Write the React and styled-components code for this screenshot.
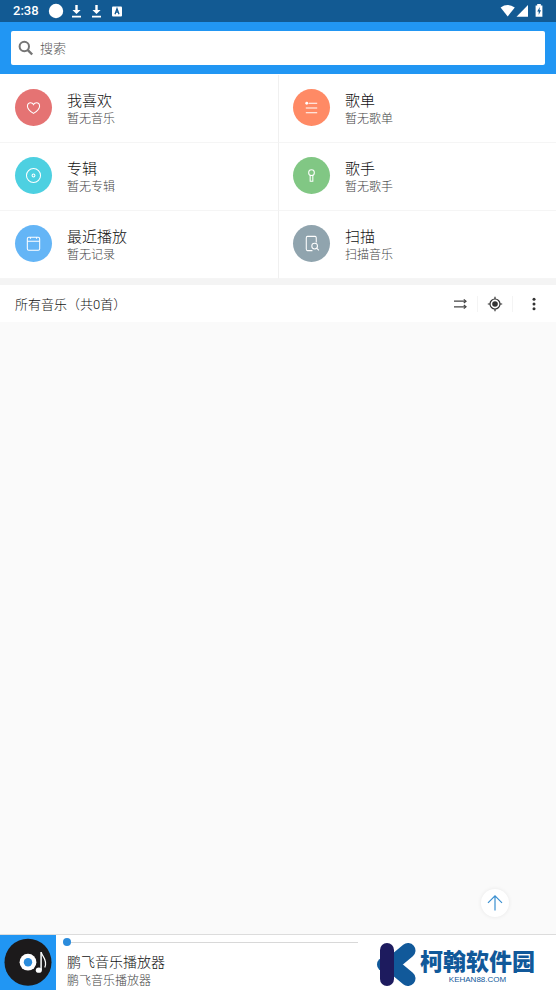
import React, { useState } from 'react';
import styled, { createGlobalStyle } from 'styled-components';

const categories = [
    { name: '我喜欢', desc: '暂无音乐', color: '#e57373', icon: 'heart' },
    { name: '歌单', desc: '暂无歌单', color: '#ff8a65', icon: 'list' },
    { name: '专辑', desc: '暂无专辑', color: '#4dd0e1', icon: 'disc' },
    { name: '歌手', desc: '暂无歌手', color: '#81c784', icon: 'mic' },
    { name: '最近播放', desc: '暂无记录', color: '#64b5f6', icon: 'recent' },
    { name: '扫描', desc: '扫描音乐', color: '#90a4ae', icon: 'scan' },
];

const icons = {
    heart: <path d="M10 16.2C6 13.6 3.6 11.4 3.6 8.6C3.6 6.4 5.1 5 6.9 5C8.4 5 9.5 5.9 10 6.9C10.5 5.9 11.6 5 13.1 5C14.9 5 16.4 6.4 16.4 8.6C16.4 11.4 14 13.6 10 16.2Z" />,
    list: (
        <>
            <path d="M7 5.5H16M4 10.5H16M4 15.5H16" />
            <circle cx="5" cy="5.5" r="1.5" fill="#fff" stroke="none" />
        </>
    ),
    disc: (
        <>
            <circle cx="10" cy="10" r="7.4" />
            <circle cx="10" cy="10" r="1.5" />
        </>
    ),
    mic: (
        <>
            <circle cx="10" cy="7" r="3" />
            <path d="M8.6 9.8V16H11.4V9.8" />
        </>
    ),
    recent: (
        <>
            <rect x="3.5" y="3.5" width="13" height="13.5" rx="1.5" />
            <path d="M3.5 7.6H16.5M6.8 3.5V5M13.2 3.5V5" />
        </>
    ),
    scan: (
        <>
            <path d="M15 9V4.2Q15 2.5 13.8 2.5H5.7Q4.5 2.5 4.5 4.2V15.8Q4.5 17.5 5.7 17.5H11" />
            <circle cx="13.3" cy="12.7" r="3" />
            <path d="M15.4 14.8L17.8 17.2" />
        </>
    ),
};

function StatusBar() {
    return (
        <Status>
            <Clock>2:38</Clock>
            <svg width="76" height="22" viewBox="0 0 76 22" fill="#fff">
                <circle cx="8" cy="11" r="7.2" />
                <path d="M27.3 5H29.7V10H32.6L28.5 14L24.4 10H27.3ZM24 15.8H33V17.4H24Z" />
                <path d="M47.3 5H49.7V10H52.6L48.5 14L44.4 10H47.3ZM44 15.8H53V17.4H44Z" />
                <rect x="64" y="6.4" width="10" height="10" rx="1" />
                <path d="M67 14.2L69 8.7L71 14.2M67.7 12.2H70.3" fill="none" stroke="#125a93" strokeWidth="1.3" />
            </svg>
            <Spacer />
            <svg width="46" height="22" viewBox="0 0 46 22" fill="#fff">
                <path d="M2.6 7.5Q9.7 2.6 16.8 7.5L9.7 16.4Z" />
                <path d="M30 5V16.8H18.5Z" />
                <path d="M39.2 4H42.8V5.4H44.4V16.8H37.6V5.4H39.2Z" />
                <path d="M41.8 7L39.2 11.4H40.7V15L43 10.2H41.5Z" fill="#125a93" />
            </svg>
        </Status>
    );
}

function Category({ item }) {
    return (
        <Cell>
            <Round $color={item.color}>
                <svg width="19" height="19" viewBox="0 0 20 20" fill="none" stroke="#fff" strokeWidth="1.1">
                    {icons[item.icon]}
                </svg>
            </Round>
            <Lines>
                <CellTitle>{item.name}</CellTitle>
                <CellDesc>{item.desc}</CellDesc>
            </Lines>
        </Cell>
    );
}

function Player() {
    const [position, setPosition] = useState(0);

    return (
        <PlayerBar>
            <Cover>
                <svg width="56" height="55" viewBox="0 0 56 55">
                    <circle cx="28" cy="27.2" r="23.5" fill="#1c1a1b" />
                    <circle cx="28" cy="27.2" r="8.4" fill="#fff" />
                    <circle cx="28" cy="27.2" r="4.2" fill="#2b8cdc" />
                    <ellipse cx="38.8" cy="35.2" rx="3" ry="2.6" fill="#fff" />
                    <path d="M41.1 35V17" stroke="#fff" strokeWidth="1.5" />
                    <path d="M41.4 17.5C42 21.5 48 24.5 44.8 32.5" fill="none" stroke="#fff" strokeWidth="1.2" />
                </svg>
            </Cover>
            <Track>
                <Seek
                    type="range"
                    aria-label="播放进度"
                    value={position}
                    onChange={(e) => setPosition(e.target.value)}
                />
                <Song>鹏飞音乐播放器</Song>
                <Artist>鹏飞音乐播放器</Artist>
            </Track>
            <Brand>
                <svg width="40" height="44" viewBox="0 0 40 44">
                    <path d="M13 23.5L31 8.5M13 21.5L31 36.5" stroke="#11599a" strokeWidth="15" strokeLinecap="round" />
                    <circle cx="7" cy="22.5" r="7" fill="#11599a" />
                    <rect x="3" y="1" width="14" height="43" rx="7" fill="#1d1b5e" />
                </svg>
                <BrandText>
                    <BrandName>柯翰软件园</BrandName>
                    <BrandSite>KEHAN88.COM</BrandSite>
                </BrandText>
            </Brand>
        </PlayerBar>
    );
}

function App() {
    return (
        <Page>
            <GlobalStyle />
            <StatusBar />
            <Header>
                <SearchBox>
                    <svg width="16" height="16" viewBox="0 0 16 16" fill="none" stroke="#757575" strokeWidth="2">
                        <circle cx="6.3" cy="6.5" r="4.7" />
                        <path d="M9.6 9.8L14.2 14.5" strokeWidth="2.4" />
                    </svg>
                    <SearchInput type="text" placeholder="搜索" aria-label="搜索" />
                </SearchBox>
            </Header>
            <Grid>
                {categories.map((item) => (
                    <Category key={item.name} item={item} />
                ))}
            </Grid>
            <ListHead>
                <ListTitle>所有音乐（共0首）</ListTitle>
                <Tool aria-label="播放顺序">
                    <svg width="16" height="16" viewBox="0 0 16 16" fill="none" stroke="#444" strokeWidth="1.2">
                        <path d="M2 5.2H13.5M2 10.8H13.5" />
                        <path d="M11.8 3.4L14 5.2L11.8 7M11.8 9L14 10.8L11.8 12.6" />
                    </svg>
                </Tool>
                <Tool aria-label="定位">
                    <svg width="16" height="16" viewBox="0 0 16 16" fill="none" stroke="#333" strokeWidth="1.2">
                        <circle cx="8" cy="8" r="5" />
                        <circle cx="8" cy="8" r="2.8" fill="#333" stroke="none" />
                        <path d="M8 .8V3M8 13V15.2M.8 8H3M13 8H15.2" />
                    </svg>
                </Tool>
                <MoreTool aria-label="更多">
                    <svg width="16" height="16" viewBox="0 0 16 16" fill="#333">
                        <circle cx="8" cy="3.2" r="1.5" />
                        <circle cx="8" cy="8" r="1.5" />
                        <circle cx="8" cy="12.8" r="1.5" />
                    </svg>
                </MoreTool>
            </ListHead>
            <SongList>
                <TopButton aria-label="回到顶部">
                    <svg width="18" height="18" viewBox="0 0 18 18" fill="none" stroke="#3a8fd0" strokeWidth="1.2">
                        <path d="M9 16.5V1.5M2 8.8L9 1.8L16 8.8" />
                    </svg>
                </TopButton>
            </SongList>
            <Player />
        </Page>
    );
}

export default App;

const GlobalStyle = createGlobalStyle`
    * {
        box-sizing: border-box;
    }

    body {
        margin: 0;
        font-family: Roboto, "Noto Sans CJK SC", sans-serif;
        color: #333;
    }

    button {
        margin: 0;
        padding: 0;
        border: none;
        background: none;
        font: inherit;
        color: inherit;
        cursor: pointer;
    }

    svg {
        display: block;
        flex-shrink: 0;
    }
`;

const Page = styled.div`
    display: flex;
    flex-direction: column;
    min-height: 100vh;
    background: #fafafa;
`;

const Status = styled.div`
    display: flex;
    align-items: center;
    height: 22px;
    padding: 0 12px 0 13px;
    background: #125a93;
`;

const Clock = styled.span`
    width: 35px;
    font-size: 13px;
    font-weight: 500;
    line-height: 24px;
    color: #fff;
`;

const Spacer = styled.div`
    flex: 1;
`;

const Header = styled.header`
    padding: 9px 11px;
    background: #2196f3;
`;

const SearchBox = styled.label`
    display: flex;
    align-items: center;
    gap: 6px;
    height: 34px;
    padding: 0 7px;
    border-radius: 2px;
    background: #fff;
`;

const SearchInput = styled.input`
    flex: 1;
    min-width: 0;
    padding: 0;
    border: none;
    outline: none;
    background: none;
    font-family: inherit;
    font-size: 13px;
    font-weight: 300;

    &::placeholder {
        color: #555;
    }
`;

const Grid = styled.nav`
    display: grid;
    grid-template-columns: 1fr 1fr;
    padding-top: 1px;
    background: #fff;
`;

const Cell = styled.button`
    display: flex;
    align-items: center;
    gap: 15px;
    height: 68px;
    padding: 0 15px 2px;
    border-bottom: 1px solid #f5f5f5;
    text-align: left;

    &:nth-child(even) {
        border-left: 1px solid #f0f0f0;
        padding-left: 14px;
    }
`;

const Round = styled.span`
    display: flex;
    align-items: center;
    justify-content: center;
    width: 37px;
    height: 37px;
    border-radius: 50%;
    background: ${(props) => props.$color};
`;

const Lines = styled.span`
    display: flex;
    flex-direction: column;
    padding-top: 4px;
`;

const CellTitle = styled.span`
    font-size: 15px;
    font-weight: 300;
    line-height: 18px;
    color: #111;
`;

const CellDesc = styled.span`
    font-size: 12px;
    font-weight: 300;
    line-height: 18px;
    color: #444;
`;

const ListHead = styled.div`
    display: flex;
    align-items: center;
    height: 43px;
    padding: 0 14px 0 15px;
    border-top: 6px solid #f4f4f4;
    background: #fff;
`;

const ListTitle = styled.h2`
    flex: 1;
    margin: 0;
    font-size: 13px;
    font-weight: 300;
    color: #111;
`;

const Tool = styled.button`
    padding: 0 9px;
    border-right: 1px solid #f4f4f4;
`;

const MoreTool = styled.button`
    margin-left: 13px;
`;

const SongList = styled.main`
    position: relative;
    flex: 1;
`;

const TopButton = styled.button`
    position: absolute;
    right: 47px;
    bottom: 17px;
    display: flex;
    align-items: center;
    justify-content: center;
    width: 28px;
    height: 28px;
    border-radius: 50%;
    background: #fff;
    box-shadow: 0 0 4px rgba(0, 0, 0, 0.08);
`;

const PlayerBar = styled.footer`
    display: flex;
    height: 56px;
    border-top: 1px solid #dcdcdc;
    background: #fff;
`;

const Cover = styled.div`
    width: 56px;
    background: #2196f3;
`;

const Track = styled.div`
    display: flex;
    flex: 1;
    flex-direction: column;
    padding-left: 11px;
`;

const Seek = styled.input`
    appearance: none;
    width: 100%;
    height: 8px;
    margin: 3px 0 6px -4px;
    background: linear-gradient(#d8d8d8, #d8d8d8) center / 100% 1px no-repeat;

    &::-webkit-slider-thumb {
        appearance: none;
        width: 8px;
        height: 8px;
        border-radius: 50%;
        background: #2b8cdc;
    }
`;

const Song = styled.span`
    font-size: 14px;
    font-weight: 300;
    line-height: 20px;
    color: #111;
`;

const Artist = styled.span`
    font-size: 12px;
    font-weight: 300;
    line-height: 18px;
    color: #444;
`;

const Brand = styled.div`
    display: flex;
    gap: 3px;
    padding: 7px 21px 0 15px;
`;

const BrandText = styled.div`
    display: flex;
    flex-direction: column;
    align-items: center;
    padding-top: 8px;
`;

const BrandName = styled.span`
    font-size: 23px;
    font-weight: 900;
    line-height: 26px;
    color: #11599a;
`;

const BrandSite = styled.span`
    font-family: "Liberation Sans", sans-serif;
    font-size: 8px;
    line-height: 8px;
    color: #11599a;
`;
